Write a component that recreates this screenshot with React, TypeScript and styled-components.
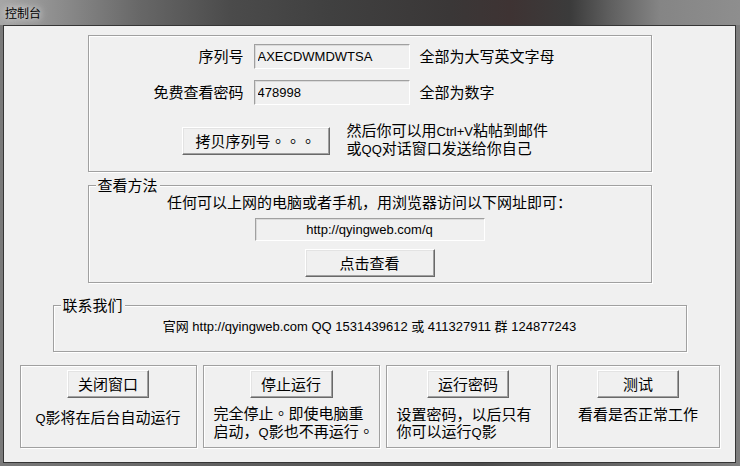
import styled, { createGlobalStyle } from 'styled-components';

const GlobalStyle = createGlobalStyle`
  html, body {
    margin: 0;
    padding: 0;
    background: #6b6b6b;
  }
  body {
    font-family: "Liberation Sans", "Noto Sans CJK SC", sans-serif;
  }
`;

export const Window = styled.div`
  width: 740px;
  height: 466px;
  display: flex;
  flex-direction: column;
  background: linear-gradient(90deg, #7a7a7a 0, #606060 30%, #4c4c4c 65%, #7e7e7e 100%);
`;

export const TitleBar = styled.div`
  height: 25px;
  flex: none;
  display: flex;
  align-items: center;
  padding-left: 5px;
  font-size: 12px;
  color: #000;
  text-shadow: 0 0 6px #e8e8e8, 0 0 10px #d0d0d0;
  background: linear-gradient(
    90deg,
    #a6a6a6 0px,
    #8c8c8c 60px,
    #676767 140px,
    #4b4b4b 230px,
    #404040 330px,
    #3a3737 450px,
    #3e3333 510px,
    #3b3b3b 570px,
    #5f5f5f 610px,
    #858585 660px,
    #8e8e8e 740px
  );
`;

export const Client = styled.div`
  flex: 1;
  margin: 0 4px 3px 3px;
  border: 1px solid #353535;
  background: #f0f0f0;
  display: flex;
  flex-direction: column;
  align-items: center;
  color: #000;
  font-size: 15px;
  line-height: 17px;
`;

export const Panel = styled.div`
  box-sizing: border-box;
  width: 564px;
  height: 137px;
  margin-top: 9px;
  padding-top: 8px;
  border: 1px solid #a0a0a0;
  box-shadow: inset 1px 1px 0 #fff, 1px 1px 0 #fff;
`;

export const Group = styled.div<{ $w: number; $h: number; $top: number; $pad: number }>`
  position: relative;
  box-sizing: border-box;
  width: ${(p) => p.$w}px;
  height: ${(p) => p.$h}px;
  margin-top: ${(p) => p.$top}px;
  padding-top: ${(p) => p.$pad}px;
  border: 1px solid #a0a0a0;
  box-shadow: inset 1px 1px 0 #fff, 1px 1px 0 #fff;
  display: flex;
  flex-direction: column;
  align-items: center;
`;

export const Legend = styled.span`
  position: absolute;
  top: -9px;
  left: 7px;
  padding: 0 2px;
  background: #f0f0f0;
  font-size: 15px;
  line-height: 17px;
`;

export const FormGrid = styled.div`
  display: grid;
  grid-template-columns: 155px 156px auto;
  column-gap: 10px;
  row-gap: 11px;
  align-items: center;
`;

export const Label = styled.span`
  text-align: right;
`;

export const Field = styled.input<{ $w: number; $h: number; $center?: boolean }>`
  box-sizing: border-box;
  width: ${(p) => p.$w}px;
  height: ${(p) => p.$h}px;
  margin: 0;
  padding: 0 3px;
  font-family: "Liberation Sans", Arial, sans-serif;
  font-size: 13px;
  color: #000;
  text-align: ${(p) => (p.$center ? 'center' : 'left')};
  background: #f0f0f0;
  border: 1px solid;
  border-color: #a0a0a0 #fff #fff #a0a0a0;
  box-shadow: inset 1px 1px 0 #dadada;
  outline: none;
`;

export const Button = styled.button<{ $w: number; $top?: number }>`
  box-sizing: border-box;
  flex: none;
  width: ${(p) => p.$w}px;
  height: 28px;
  margin-top: ${(p) => p.$top ?? 0}px;
  padding: 0;
  font-family: "Liberation Sans", "Noto Sans CJK SC", sans-serif;
  font-size: 15px;
  line-height: 17px;
  color: #000;
  background: #f0f0f0;
  border: 1px solid;
  border-color: #fff #696969 #696969 #fff;
  box-shadow: inset -1px -1px 0 #a0a0a0, inset 1px 1px 0 #e3e3e3;
`;

export const CopyRow = styled.div`
  display: flex;
  align-items: flex-start;
  gap: 17px;
  margin-top: 17px;
  padding-left: 93px;
`;

export const Narrow = styled.span`
  font-family: "Liberation Sans Narrow", "Liberation Sans", sans-serif;
  font-size: 13px;
`;

export const Stop = styled.span`
  font-family: "Noto Sans CJK TC", sans-serif;
`;

export const Hint = styled.div``;

export const Spacer = styled.div<{ $h: number }>`
  height: ${(p) => p.$h}px;
  flex: none;
`;

export const ContactLine = styled.div`
  font-size: 13px;
  line-height: 17px;
`;

export const ActionRow = styled.div`
  display: grid;
  grid-template-columns: 177px 177px 165px 163px;
  column-gap: 6px;
  margin-top: 13px;
`;

export const ActionBox = styled.div`
  box-sizing: border-box;
  height: 83px;
  padding-top: 4px;
  border: 1px solid #a0a0a0;
  box-shadow: inset 1px 1px 0 #fff, 1px 1px 0 #fff;
  display: flex;
  flex-direction: column;
  align-items: center;
`;

export const ActionText = styled.div<{ $left?: boolean; $top: number }>`
  align-self: ${(p) => (p.$left ? 'stretch' : 'center')};
  padding-left: ${(p) => (p.$left ? '10px' : '0')};
  margin-top: ${(p) => p.$top}px;
  white-space: nowrap;
`;

export default function App() {
  return (
    <>
      <GlobalStyle />
      <Window>
        <TitleBar>控制台</TitleBar>
        <Client>
          <Panel>
            <FormGrid>
              <Label>序列号</Label>
              <Field $w={156} $h={25} readOnly value="AXECDWMDWTSA" />
              <Hint>全部为大写英文字母</Hint>
              <Label>免费查看密码</Label>
              <Field $w={156} $h={25} readOnly value="478998" />
              <Hint>全部为数字</Hint>
            </FormGrid>
            <CopyRow>
              <Button $w={148} $top={5}>
                拷贝序列号<Stop>。。。</Stop>
              </Button>
              <Hint>
                然后你可以用<Narrow>Ctrl+V</Narrow>粘帖到邮件
                <br />
                或<Narrow>QQ</Narrow>对话窗口发送给你自己
              </Hint>
            </CopyRow>
          </Panel>

          <Group $w={564} $h={98} $top={13} $pad={8}>
            <Legend>查看方法</Legend>
            <Hint>任何可以上网的电脑或者手机，用浏览器访问以下网址即可：</Hint>
            <Spacer $h={7} />
            <Field $w={230} $h={23} $center readOnly value="http://qyingweb.com/q" />
            <Spacer $h={8} />
            <Button $w={130}>点击查看</Button>
          </Group>

          <Group $w={634} $h={47} $top={22} $pad={12}>
            <Legend>联系我们</Legend>
            <ContactLine>
              官网 http://qyingweb.com QQ 1531439612 或 411327911 群 124877243
            </ContactLine>
          </Group>

          <ActionRow>
            <ActionBox>
              <Button $w={82}>关闭窗口</Button>
              <ActionText $top={11}>
                <Narrow>Q</Narrow>影将在后台自动运行
              </ActionText>
            </ActionBox>
            <ActionBox>
              <Button $w={83}>停止运行</Button>
              <ActionText $left $top={6}>
                完全停止<Stop>。</Stop>即使电脑重
                <br />
                启动，<Narrow>Q</Narrow>影也不再运行<Stop>。</Stop>
              </ActionText>
            </ActionBox>
            <ActionBox>
              <Button $w={82}>运行密码</Button>
              <ActionText $left $top={8}>
                设置密码，以后只有
                <br />
                你可以运行<Narrow>Q</Narrow>影
              </ActionText>
            </ActionBox>
            <ActionBox>
              <Button $w={82}>测试</Button>
              <ActionText $top={8}>看看是否正常工作</ActionText>
            </ActionBox>
          </ActionRow>
        </Client>
      </Window>
    </>
  );
}
